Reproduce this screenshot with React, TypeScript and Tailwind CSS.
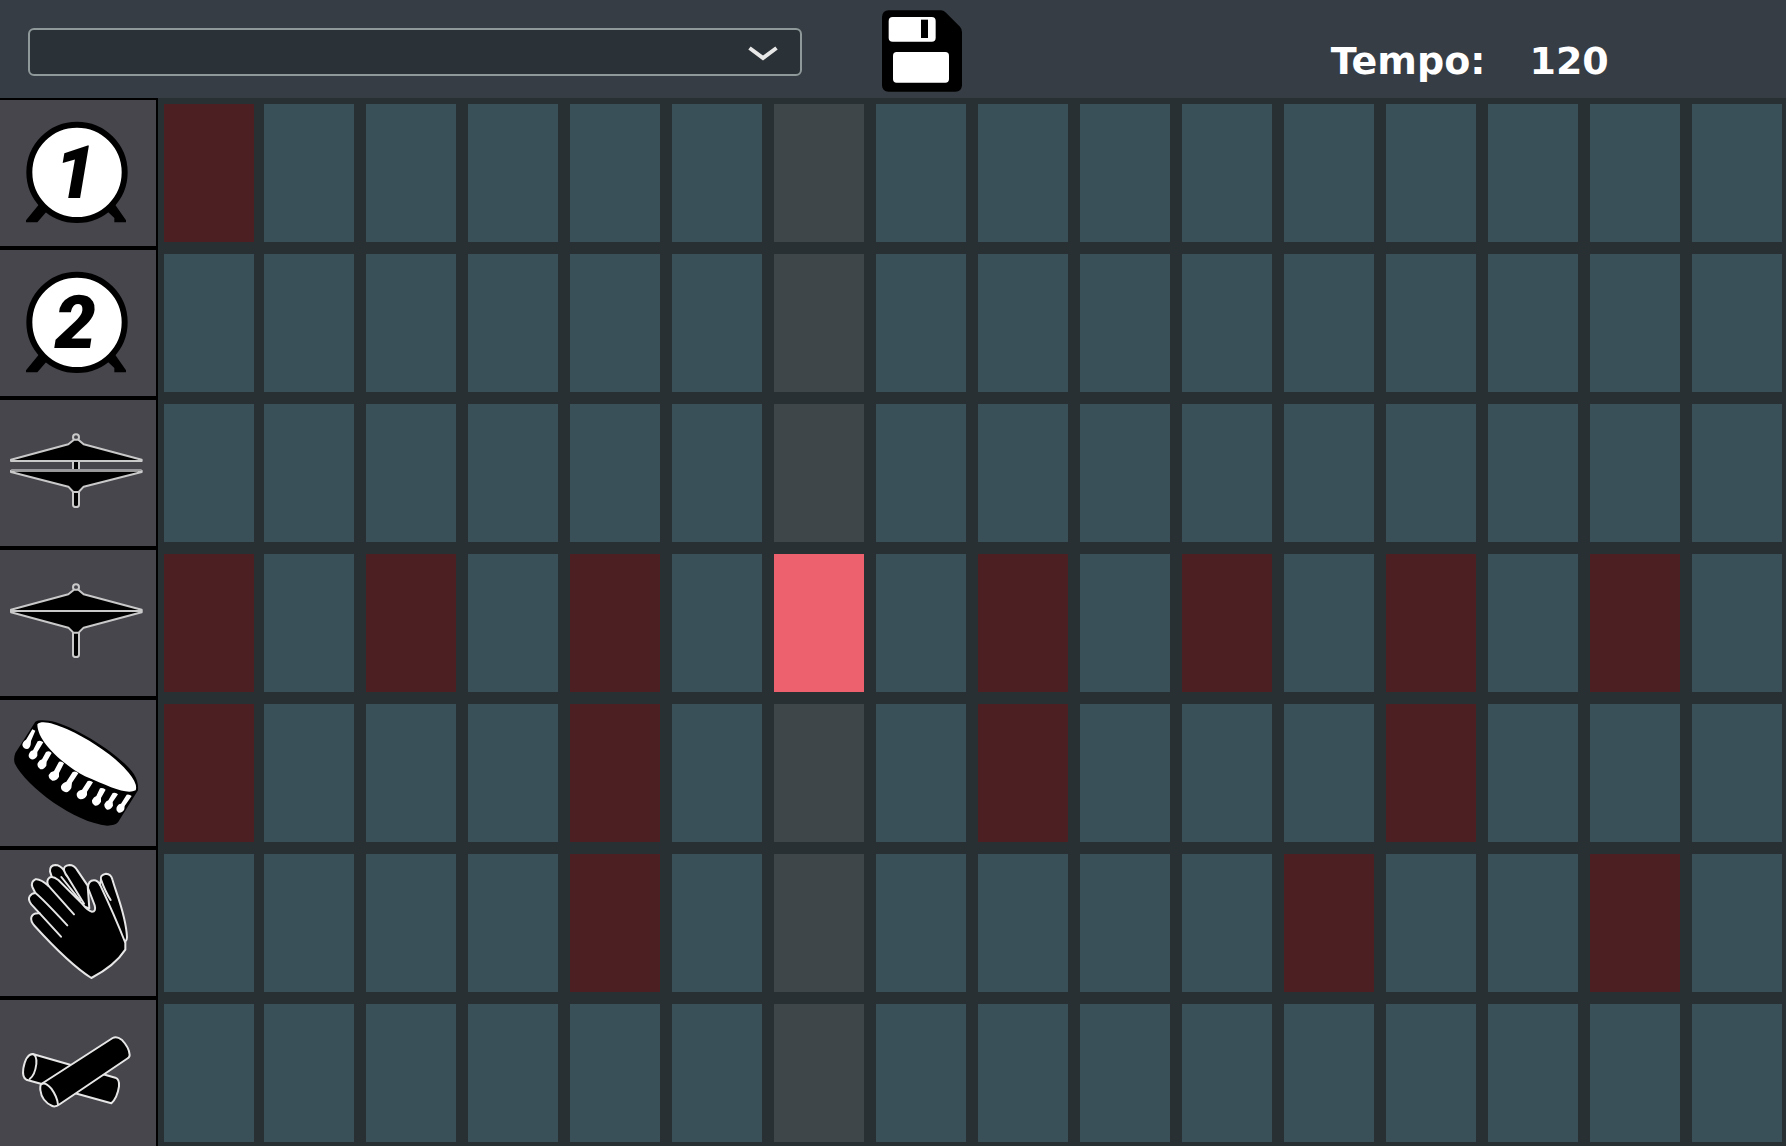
import { useState } from 'react';
import type { ReactNode } from 'react';

const STEPS = 16;
const PLAYHEAD = 6;

function Drum({ digit }: { digit: string }) {
  return (
    <svg viewBox="0 30 468 438" className="block w-full" aria-hidden="true">
      <path d="M118 342 L142 362 L112 397 H78 V391 Z M344 342 L320 362 L343 384 V397 H378 V391 Z" fill="#000" />
      <circle cx="231" cy="247" r="143" fill="#fff" stroke="#000" strokeWidth="18" />
      <text
        x="226"
        y="324"
        textAnchor="middle"
        fontSize="222"
        className="font-[Roboto,sans-serif] font-black italic"
      >
        {digit}
      </text>
    </svg>
  );
}

const line = { stroke: '#c9c9ca', strokeWidth: 6, strokeLinejoin: 'round' as const, strokeLinecap: 'round' as const };

function OpenHat() {
  return (
    <svg viewBox="0 30 468 438" className="block w-full" aria-hidden="true">
      <g {...line}>
        <rect x="219" y="212" width="18" height="32" fill="#000" />
        <circle cx="228" cy="142" r="9" fill="#47464c" />
        <path d="M33 209 L205 163 L222 149 H235 L251 163 L425 209 V213 H33 Z" fill="#000" />
        <path d="M219 304 V344 Q219 351 228 351 Q237 351 237 344 V304 Z" fill="#000" />
        <path d="M33 242 H425 V246 L251 290 L236 306 H220 L205 290 L33 246 Z" fill="#000" />
        <path d="M36 240 H422" stroke="#99999c" />
      </g>
    </svg>
  );
}

function ClosedHat() {
  return (
    <svg viewBox="0 30 468 438" className="block w-full" aria-hidden="true">
      <g {...line}>
        <path d="M219 276 V344 Q219 351 228 351 Q237 351 237 344 V276 Z" fill="#000" />
        <circle cx="228" cy="142" r="9" fill="#47464c" />
        <path
          d="M33 209 L205 163 L222 149 H235 L251 163 L425 209 V217 L251 263 L236 278 H220 L205 263 L33 217 Z"
          fill="#000"
        />
        <path d="M34 213 H424" />
      </g>
    </svg>
  );
}

const JINGLES = [
  'M106 107 L97 103 L83 126 L78 134 Q68 139 67 150 Q70 162 81 162 Q89 161 92 149 L93 138 Z',
  'M113 139 Q121 134 130 142 L112 171 L112 182 Q105 195 94 193 Q85 188 86 180 Q89 168 99 166 Z',
  'M138 171 Q148 165 155 174 L140 200 L139 212 Q132 224 121 223 Q110 217 113 205 Q118 195 126 193 Z',
  'M177 200 Q185 197 192 205 L177 234 L177 245 Q170 258 157 257 Q145 251 146 240 Q151 230 162 228 Z',
  'M218 231 Q228 226 235 235 L216 263 L214 279 Q206 294 195 291 Q181 286 183 274 Q187 263 199 260 Z',
  'M263 258 Q272 255 279 262 L261 290 L261 300 Q254 314 241 313 Q229 308 230 296 Q234 286 246 284 Z',
  'M300 280 Q310 277 317 284 L303 309 L303 320 Q296 333 285 332 Q275 327 276 316 Q281 306 289 303 Z',
  'M338 294 Q348 291 354 298 L338 321 L339 332 Q332 345 321 344 Q312 338 313 328 Q318 318 325 316 Z',
  'M380 299 Q388 297 395 303 L374 333 L373 343 Q368 354 356 353 Q347 348 350 337 Q354 327 363 326 Z',
];

function Tambourine() {
  return (
    <svg viewBox="0 15 468 438" className="block w-full" aria-hidden="true">
      <path
        d="M106 80 Q115 73 146 77 C205 83 360 174 402 238 Q416 261 414 286 L354 382 Q345 392 322 392 C225 384 80 277 44 205 Q40 190 46 174 Z"
        fill="#000"
      />
      <path
        d="M112 88 C125 75 160 85 202 103 C275 137 345 184 386 233 Q414 267 407 286 C380 300 330 276 255 244 C200 215 112 145 112 88 Z"
        fill="#fff"
      />
      {JINGLES.map((d) => (
        <path key={d} d={d} fill="#fff" />
      ))}
    </svg>
  );
}

function Clap() {
  return (
    <svg viewBox="0 15 468 438" className="block w-full" aria-hidden="true">
      <g {...line} stroke="#e6e6e6">
        <path
          d="M156 98 L150 79 Q149 61 166 60 Q180 60 192 76 Q190 62 208 60 Q222 60 230 73 L263 122 L268 190 L240 180 Z"
          fill="#000"
        />
        <path d="M192 76 Q196 88 203 96 L252 176" fill="none" />
        <path d="M184 96 L240 166" fill="none" />
        <path
          d="M274 399 C225 368 165 310 104 243 Q91 229 94 217 Q98 203 119 205 L94 178 Q83 164 89 154 Q95 144 106 144 L97 126 Q92 110 106 103 Q120 100 145 122 Q138 106 148 98 Q158 92 175 105 L246 176 Q264 198 276 200 Q289 200 284 181 Q275 157 264 129 Q264 106 282 106 Q293 106 300 119 L303 104 Q299 90 318 86 Q333 87 337 103 C350 150 378 210 381 277 Q381 285 376 290 L376 314 Q345 362 274 399 Z"
          fill="#000"
        />
        <path d="M145 122 L222 208 M106 144 Q125 158 202 241 M119 205 L183 275 M300 119 Q343 210 375 291 M303 104 Q316 141 332 165" fill="none" />
      </g>
    </svg>
  );
}

function Claves() {
  return (
    <svg viewBox="0 15 468 438" className="block w-full" aria-hidden="true">
      <g {...line} stroke="#e6e6e6">
        <path d="M98 177 L346 248 Q359 253 357 274 Q352 308 334 325 L79 254 Q66 247 70 220 Q78 178 98 177 Z" fill="#000" />
        <path d="M98 177 Q111 180 109 207 Q105 240 89 252" fill="none" />
        <path
          d="M124 267 L338 129 Q350 122 365 134 Q388 158 389 180 Q389 187 380 192 L180 327 Q166 337 157 333 Q125 319 121 285 Q120 271 124 267 Z"
          fill="#000"
        />
        <path d="M124 267 Q137 260 154 281 Q172 306 174 329" fill="none" />
      </g>
    </svg>
  );
}

type Track = { name: string; icon: ReactNode; hits: number[] };

const TRACKS: Track[] = [
  { name: 'Kick 1', icon: <Drum digit="1" />, hits: [0] },
  { name: 'Kick 2', icon: <Drum digit="2" />, hits: [] },
  { name: 'Open hi-hat', icon: <OpenHat />, hits: [] },
  { name: 'Closed hi-hat', icon: <ClosedHat />, hits: [0, 2, 4, 6, 8, 10, 12, 14] },
  { name: 'Tambourine', icon: <Tambourine />, hits: [0, 4, 8, 12] },
  { name: 'Clap', icon: <Clap />, hits: [4, 11, 14] },
  { name: 'Claves', icon: <Claves />, hits: [] },
];

function stepColor(on: boolean, current: boolean) {
  if (on) return current ? 'bg-[#ed616e]' : 'bg-[#4c1f23]';
  return current ? 'bg-[#3f4649]' : 'bg-[#3a5059]';
}

function TopBar() {
  return (
    <header className="flex h-[98px] items-start bg-[#363d44] pl-7">
      <div className="relative mt-7 w-[44%]">
        <select
          aria-label="Pattern"
          className="block h-12 w-full appearance-none rounded-md border-2 border-[#8f9999] bg-[#2a3137] px-4 text-xl text-white"
        >
          <option value=""></option>
        </select>
        <svg viewBox="0 0 30 16" className="pointer-events-none absolute top-[18px] right-6 w-[30px]" aria-hidden="true">
          <path d="M1.5 2 L15 12 L28.500 2" fill="none" stroke="#e8e8e8" strokeWidth="4" />
        </svg>
      </div>
      <button type="button" aria-label="Save pattern" className="mt-[10px] ml-20 w-20 shrink-0">
        <svg viewBox="534 30 240 246" className="block w-full" aria-hidden="true">
          <path
            d="M554 31 H712 Q720 32 726 38 L768 80 Q774 87 774 96 V256 Q773 275 754 275 H554 Q535 275 534 256 V51 Q535 32 554 31 Z"
            fill="#000"
          />
          <rect x="554" y="51" width="141" height="74" rx="12" fill="#fff" />
          <rect x="651" y="59" width="21" height="55" fill="#000" />
          <rect x="567" y="156" width="168" height="92" rx="11" fill="#fff" />
        </svg>
      </button>
      <div className="mt-10 flex flex-1 justify-center gap-11 pl-48 font-['DejaVu_Sans',sans-serif] text-[38px] leading-[42px] font-bold text-white">
        <span>Tempo:</span>
        <output>120</output>
      </div>
    </header>
  );
}

export default function App() {
  const [grid, setGrid] = useState(() =>
    TRACKS.map((t) => Array.from({ length: STEPS }, (_, i) => t.hits.includes(i))),
  );

  const toggle = (row: number, step: number) =>
    setGrid((g) => g.map((r, i) => (i === row ? r.map((v, j) => (j === step ? !v : v)) : r)));

  return (
    <main className="bg-[#283033]">
      <TopBar />
      {TRACKS.map((track, row) => (
        <section key={track.name} aria-label={track.name} className="group flex">
          <button
            type="button"
            aria-label={track.name}
            className="w-[158px] shrink-0 overflow-hidden border-y-2 border-r-2 border-black bg-[#47464c] group-last:border-b-0"
          >
            {track.icon}
          </button>
          <div className="flex flex-1 py-1.5 pr-1 pl-1.5 group-last:pb-1">
            {grid[row].map((on, step) => (
              <button
                key={step}
                type="button"
                aria-label={`${track.name}, step ${step + 1}`}
                aria-pressed={on}
                onClick={() => toggle(row, step)}
                className={`mr-3 h-[138px] flex-1 first:mr-2.5 last:mr-0 ${stepColor(on, step === PLAYHEAD)}`}
              />
            ))}
          </div>
        </section>
      ))}
    </main>
  );
}
